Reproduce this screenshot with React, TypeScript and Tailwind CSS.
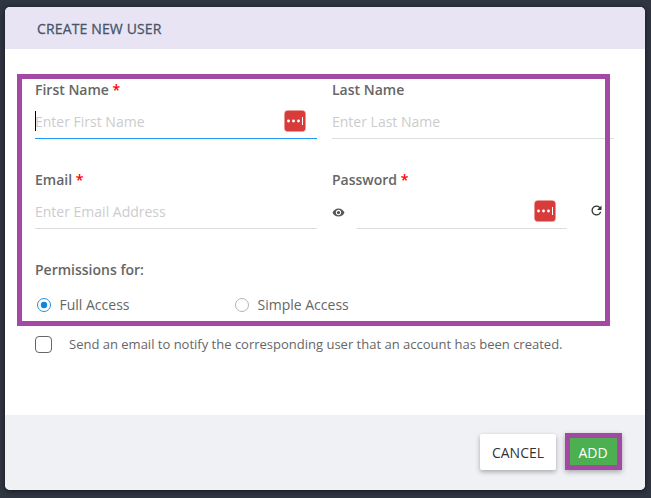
import React, { useState } from 'react';
import { MdRefresh, MdRemoveRedEye } from 'react-icons/md';

interface FieldLabelProps {
  text: string;
  required?: boolean;
}

const FieldLabel: React.FC<FieldLabelProps> = ({ text, required }) => (
  <label className="block h-5 text-sm leading-5 font-semibold text-[#666]">
    {text}
    {required && <span className="text-[#ff0000]"> *</span>}
  </label>
);

const PasswordManagerIcon: React.FC = () => (
  <svg width="22" height="22" viewBox="0 0 22 22" className="mb-0.5 shrink-0">
    <rect x="0" y="0" width="22" height="22" rx="4" fill="#f3b8b8" />
    <rect x="0.7" y="0.7" width="20.6" height="20.6" rx="3.4" fill="#d83c3a" />
    <circle cx="4.5" cy="11" r="1.45" fill="#fff" />
    <circle cx="9.5" cy="11" r="1.45" fill="#fff" />
    <circle cx="14.5" cy="11" r="1.45" fill="#fff" />
    <rect x="18" y="7" width="1" height="8" fill="#fff" />
  </svg>
);

interface RadioProps {
  label: string;
  checked: boolean;
  onSelect: () => void;
}

const Radio: React.FC<RadioProps> = ({ label, checked, onSelect }) => (
  <button
    type="button"
    role="radio"
    aria-checked={checked}
    onClick={onSelect}
    className="flex w-[198px] items-center text-sm leading-5 text-[#666]"
  >
    <svg width="14" height="14" viewBox="0 0 14 14" className="mr-[8.5px]">
      <circle cx="7" cy="7" r="6.5" fill="#fff" stroke={checked ? '#2b8fd3' : '#b4b4b4'} />
      {checked && <circle cx="7" cy="7" r="3.2" fill="#0f86dc" />}
    </svg>
    {label}
  </button>
);

const inputClass =
  'h-full w-full min-w-0 bg-transparent text-sm text-[#666] outline-none placeholder:text-[#ccc] placeholder:opacity-100';

const App: React.FC = () => {
  const [access, setAccess] = useState('full');

  return (
    <div className="h-[498px] w-[651px] bg-[#2f3541] px-[5px] pt-[7px] font-['Open_Sans',sans-serif]">
      <div className="relative flex h-[483px] w-[640px] flex-col rounded-[5px] bg-white shadow-[0_1px_5px_rgba(0,0,0,0.6)]">
        <div className="flex h-[42px] items-center rounded-t-[5px] bg-[#e8e4f3] pt-0.5 pl-8 text-sm font-medium tracking-[0.14px] text-[#475569] [-webkit-text-stroke:0.3px_#475569]">
          CREATE NEW USER
        </div>

        <form className="flex-1 pt-[31px] pl-[30px]">
          <div className="grid grid-cols-[282px_282px] gap-x-[15px] gap-y-[31px]">
            <div>
              <FieldLabel text="First Name" required />
              <div className="relative mt-[5px] flex h-[34px] items-center border-b border-[#2196f3] pr-[11px]">
                <span className="absolute top-1.5 left-0 h-5 w-px bg-black" />
                <input className={inputClass} placeholder="Enter First Name" />
                <PasswordManagerIcon />
              </div>
            </div>
            <div>
              <FieldLabel text="Last Name" />
              <div className="mt-[5px] flex h-[34px] items-center border-b border-[#ddd]">
                <input className={inputClass} placeholder="Enter Last Name" />
              </div>
            </div>
            <div>
              <FieldLabel text="Email" required />
              <div className="mt-[5px] flex h-[34px] items-center border-b border-[#ddd]">
                <input className={inputClass} placeholder="Enter Email Address" />
              </div>
            </div>
            <div>
              <FieldLabel text="Password" required />
              <div className="mt-[5px] flex h-[34px] items-center">
                <MdRemoveRedEye size={13} color="#555" className="mr-3 shrink-0" />
                <div className="flex h-full w-[210px] items-center border-b border-[#ddd] pr-[11px]">
                  <input type="password" className={inputClass} />
                  <PasswordManagerIcon />
                </div>
                <MdRefresh size={15} color="#333" className="mb-[3px] ml-[22px] shrink-0" />
              </div>
            </div>
          </div>

          <div className="mt-[31px]">
            <FieldLabel text="Permissions for:" />
            <div role="radiogroup" className="mt-[15px] ml-0.5 flex">
              <Radio label="Full Access" checked={access === 'full'} onSelect={() => setAccess('full')} />
              <Radio label="Simple Access" checked={access === 'simple'} onSelect={() => setAccess('simple')} />
            </div>
          </div>

          <label className="mt-[21px] flex h-[17px] items-center text-[13px] text-[#666]">
            <input
              type="checkbox"
              className="mr-[17px] h-[17px] w-[17px] appearance-none rounded-[4px] border border-[#666] bg-white checked:bg-[#2196f3]"
            />
            Send an email to notify the corresponding user that an account has been created.
          </label>
        </form>

        <div className="flex h-[75px] items-start justify-end gap-[9px] rounded-b-[5px] bg-[#f0f1f5] pt-[18px] pr-[23px]">
          <button className="mt-px h-9 w-[76px] rounded-[2px] bg-white pt-0.5 text-sm text-[#333] shadow-[0_2px_5px_rgba(0,0,0,0.3)]">
            CANCEL
          </button>
          <button className="h-[37px] w-[57px] border-[5px] border-[#a349a4] bg-[#4caf50] pt-0.5 pr-px text-sm text-white shadow-[0_2px_5px_rgba(0,0,0,0.3)]">
            ADD
          </button>
        </div>

        {/* highlight frame over the user details */}
        <div className="pointer-events-none absolute top-[67px] left-3 h-[252px] w-[593px] border-[5px] border-[#a349a4]" />
      </div>
    </div>
  );
};

export default App;
